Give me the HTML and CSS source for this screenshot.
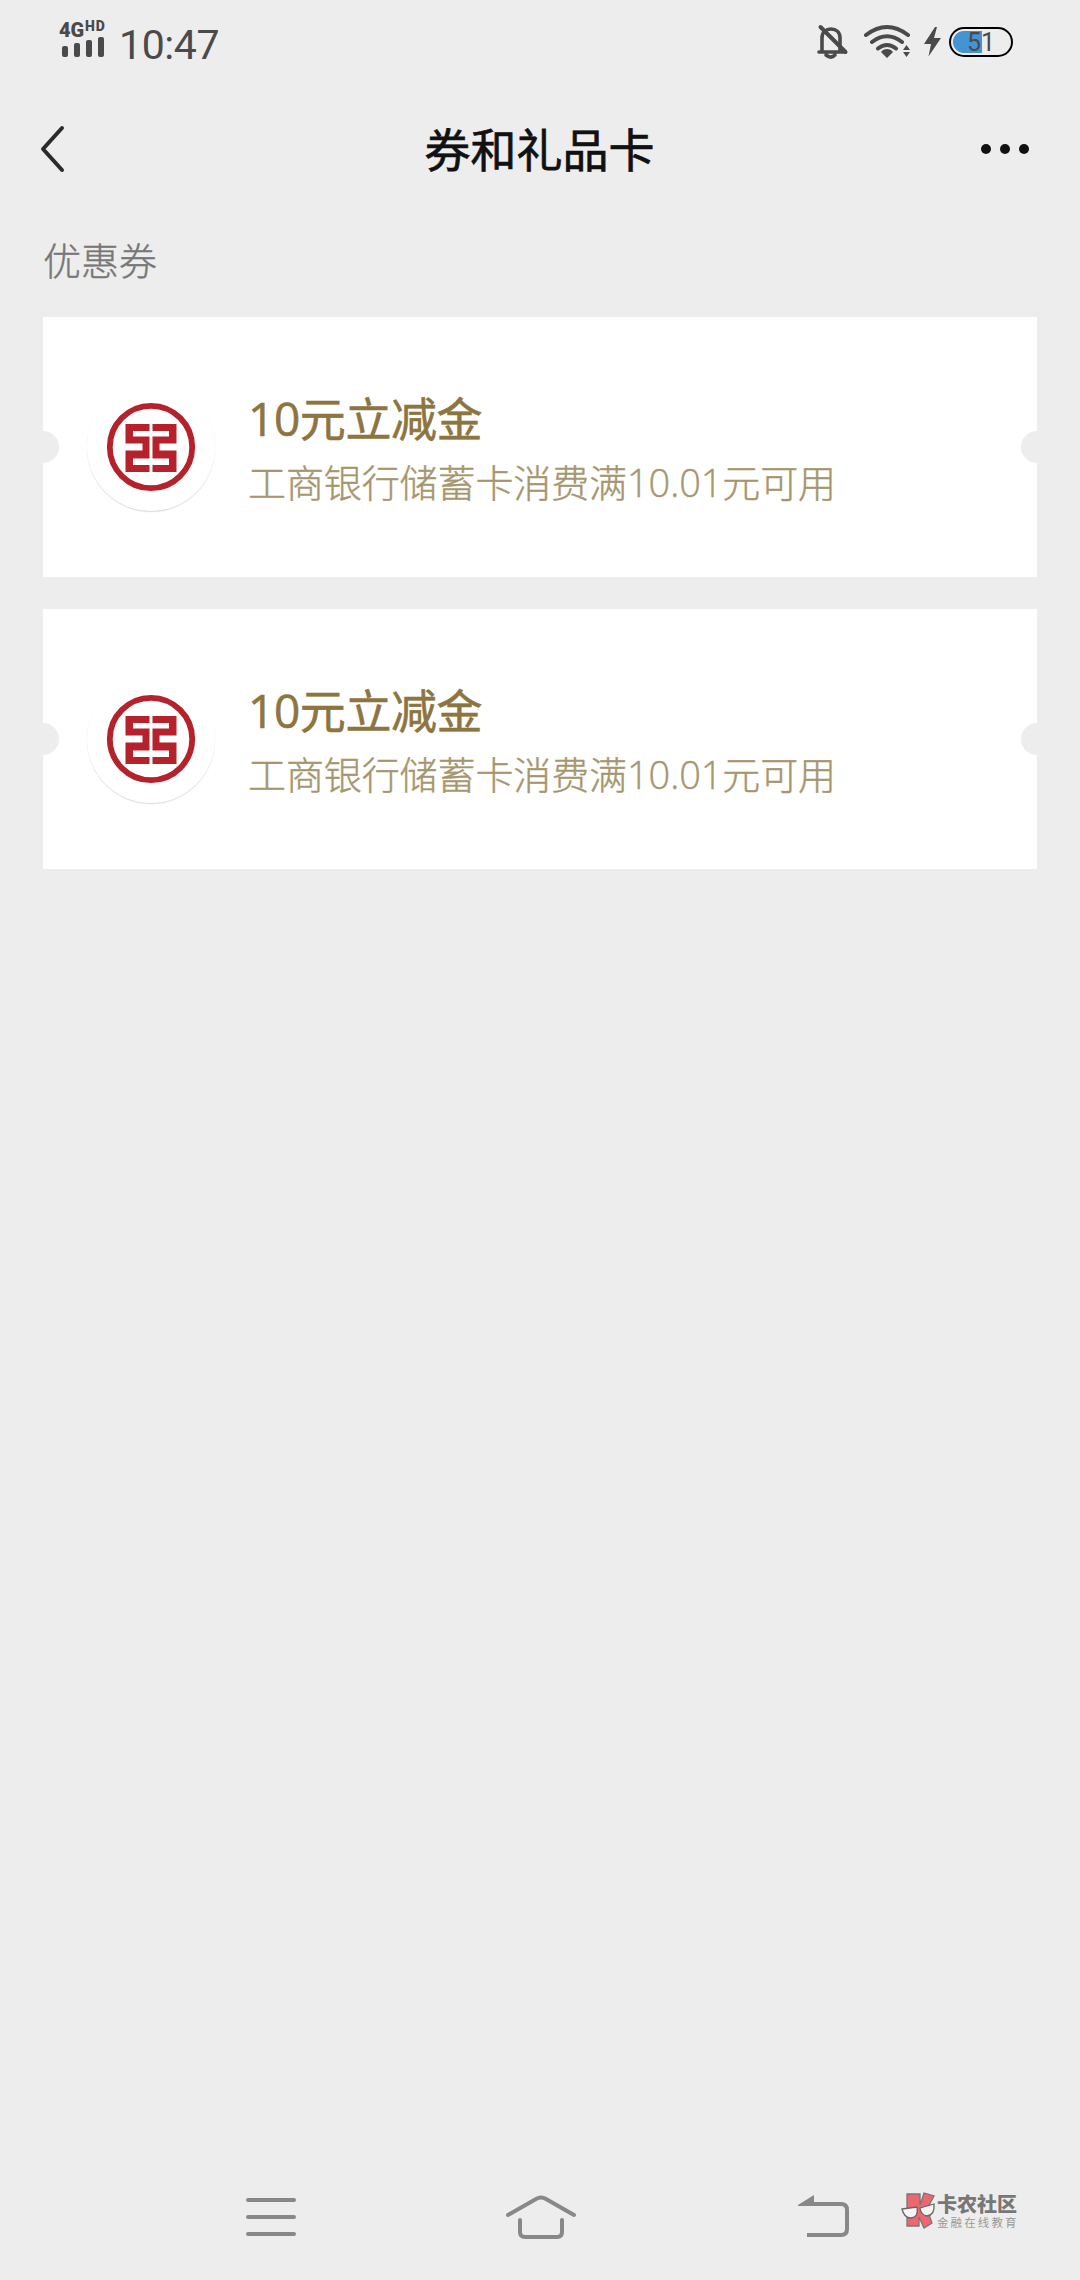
FILE: index.html
```html
<!DOCTYPE html>
<html lang="zh-CN">
<head>
<meta charset="utf-8">
<title>券和礼品卡</title>
<link rel="stylesheet" href="styles.css">
</head>
<body>
<svg class="defs" width="0" height="0" aria-hidden="true">
  <symbol id="bank" viewBox="0 0 128 128">
    <circle cx="64" cy="64" r="41.2" fill="none" stroke="#b5222b" stroke-width="5.8"/>
    <path fill="#b5222b" d="M38.500 41H62.500V48H46V53.500H62.500V75.500H46V82H62.500V89H38.500V67.500H55.500V60.500H38.500ZM89.500 41H65.500V48H82V53.500H65.500V75.500H82V82H65.500V89H89.500V67.500H72.500V60.500H89.500Z"/>
  </symbol>
</svg>
<div class="screen">
  <div class="status">
    <div class="signal">
      <div class="net"><span class="g4">4G</span><span class="hd">HD</span></div>
      <svg width="44" height="22" viewBox="0 0 44 22" fill="#4a4a4a"><rect x="1" y="10" width="6" height="11" rx="2"/><rect x="13" y="7" width="6" height="14" rx="2"/><rect x="25" y="4" width="6" height="17" rx="2"/><rect x="37" y="1" width="6" height="20" rx="2"/></svg>
    </div>
    <span class="time">10:47</span>
    <svg class="indicators" width="120" height="40" viewBox="814 22 120 40" fill="none" stroke="#4a4a4a" stroke-linecap="round">
      <path stroke-width="3.600" d="M822 51V38C822 32 826 29 831 29S840 32 840 38V51M819 52H845M826 55Q831 59 835 55"/>
      <path stroke-width="4" d="M820.500 27L845.500 52"/>
      <g stroke-width="4"><path d="M866 35Q887 19 908 35M872 42Q887 30.500 902 42M878 48.500Q887 41.500 896 48.500"/></g>
      <path stroke="none" fill="#4a4a4a" d="M887 49Q891 49 893 52L887 58L881 52Q883 49 887 49ZM906.500 45L910 50H903ZM906.500 57L903 52H910Z"/>
    </svg>
    <svg class="bolt" width="18" height="30" viewBox="0 0 18 30"><path fill="#4a4a4a" d="M11 0L0 17H7L4.500 29.500L17 11H10L13 0Z"/></svg>
    <div class="battery"><span>51</span></div>
  </div>
  <header class="nav">
    <svg width="26" height="50" viewBox="0 0 26 50"><path d="M23 4L4 25L23 46" fill="none" stroke="#2b2b2b" stroke-width="4" stroke-linecap="round" stroke-linejoin="round"/></svg>
    <h1>券和礼品卡</h1>
    <svg width="50" height="12" viewBox="0 0 50 12" fill="#111"><circle cx="6" cy="6" r="5"/><circle cx="25" cy="6" r="5"/><circle cx="44" cy="6" r="5"/></svg>
  </header>
  <main>
    <h2>优惠券</h2>
    <article class="coupon">
      <svg class="logo" viewBox="0 0 128 128"><use href="#bank"/></svg>
      <div class="info"><h3>10元立减金</h3><p>工商银行储蓄卡消费满10.01元可用</p></div>
    </article>
    <article class="coupon">
      <svg class="logo" viewBox="0 0 128 128"><use href="#bank"/></svg>
      <div class="info"><h3>10元立减金</h3><p>工商银行储蓄卡消费满10.01元可用</p></div>
    </article>
  </main>
  <footer class="sysnav">
    <svg width="52" height="44" viewBox="0 0 52 44"><path d="M3 5H49M3 22H49M3 39H49"/></svg>
    <svg width="74" height="48" viewBox="0 0 74 48"><path d="M4 22L32 6Q37 3 42 6L70 22M16 27V39Q16 44 21 44H53Q58 44 58 39V27"/></svg>
    <svg width="54" height="44" viewBox="0 0 54 44"><path stroke-linecap="butt" d="M10 9H44Q50 9 50 15V34Q50 40 44 40H10"/><path class="tip" d="M1 10L17 0V11H1Z"/></svg>
    <div class="brand">
      <svg width="36" height="38" viewBox="0 0 36 38"><path d="M6 2H19V13L23 1L33 4L26 17L31 31L23 36L18 25V34H6Z" fill="#ee6670" stroke="#777" stroke-width="1.300"/><path d="M1 17L16 15Q18 25 10 26Q3 26 1 17ZM19 16L33 12Q34 23 26 24Q20 23 19 16Z" fill="#f5f5f5" stroke="#666" stroke-width="1.300"/></svg>
      <div class="words"><b>卡农社区</b><small>金融在线教育</small></div>
    </div>
  </footer>
</div>
</body>
</html>
```
FILE: styles.css
```css
* { box-sizing: border-box; margin: 0; }
body { background: #ededed; font-family: "Noto Sans CJK SC", sans-serif; }
.defs { display: block; }
.screen { height: 2280px; display: flex; flex-direction: column; }
.status { height: 84px; padding: 20px 67px 0 59px; display: flex; align-items: flex-start; color: #4a4a4a; }
.signal { width: 49px; }
.signal svg { display: block; margin: 0 0 0 2px; }
.net { display: flex; height: 16px; font-family: Roboto, sans-serif; font-weight: 900; white-space: nowrap; }
.g4 { font-size: 20px; line-height: 20px; width: 26px; }
.hd { font-size: 14px; line-height: 13px; letter-spacing: .8px; }
.time { font: 41px/50px Roboto, sans-serif; margin-left: 11px; letter-spacing: -.4px; }
.indicators { margin: 2px 0 0 auto; }
.bolt { margin: 7px 7px 0 -10px; }
.battery { width: 64px; height: 30px; margin-top: 7px; border: 2px solid #000; border-radius: 15px; background: radial-gradient(circle at 13px 50%, #4493d3 10.500px, transparent 11.500px), linear-gradient(#4493d3, #4493d3) 13px 2px / 18px 22px no-repeat; text-align: center; font: 25px/27px Roboto, sans-serif; overflow: hidden; }
.nav { height: 130px; padding: 0 50px 0 39px; display: grid; grid-template-columns: 50px 1fr 50px; align-items: center; }
.nav h1 { font-size: 46px; line-height: 68px; font-weight: 400; -webkit-text-stroke: .7px; color: #111; text-align: center; padding: 0 0 5px 10px; }
main { flex: 1; padding: 15px 43px; }
h2 { font-size: 38px; line-height: 60px; font-weight: 300; -webkit-text-stroke: .4px; color: #777; margin-bottom: 28px; }
.coupon { height: 260px; margin-bottom: 32px; padding-left: 44px; display: flex; align-items: center; background: radial-gradient(circle at 0 50%, #ededed 15.500px, transparent 16.500px), radial-gradient(circle at 100% 50%, #ededed 15.500px, transparent 16.500px), #fff; }
.logo { width: 128px; height: 128px; border-radius: 50%; box-shadow: 0 1px 1px #ddd; }
.info { margin-left: 33px; padding-top: 3px; font-family: "Open Sans", "Noto Sans CJK SC", sans-serif; }
.info h3 { font-size: 46px; line-height: 66px; font-weight: 400; letter-spacing: -.4px; -webkit-text-stroke: .6px; color: #8d7540; }
.info p { font-size: 38px; line-height: 62px; font-weight: 300; letter-spacing: -.1px; -webkit-text-stroke: .4px; color: #a6966d; }
.sysnav { height: 126px; padding: 0 63px 0 245px; display: flex; align-items: center; }
.sysnav > svg { fill: none; stroke: #888; stroke-width: 4; stroke-linecap: round; }
.sysnav > svg:nth-child(2) { margin-left: 207px; }
.sysnav > svg:nth-child(3) { margin-left: 219px; }
.sysnav .tip { fill: #888; stroke: none; }
.brand { margin-left: auto; padding-bottom: 13px; display: flex; align-items: center; }
.words { display: flex; flex-direction: column; white-space: nowrap; color: #777; }
.words b { font-size: 20px; line-height: 23px; font-weight: 900; }
.words small { font-size: 11.500px; line-height: 14px; letter-spacing: 2.100px; color: #999; margin-right: -3px; }
```
